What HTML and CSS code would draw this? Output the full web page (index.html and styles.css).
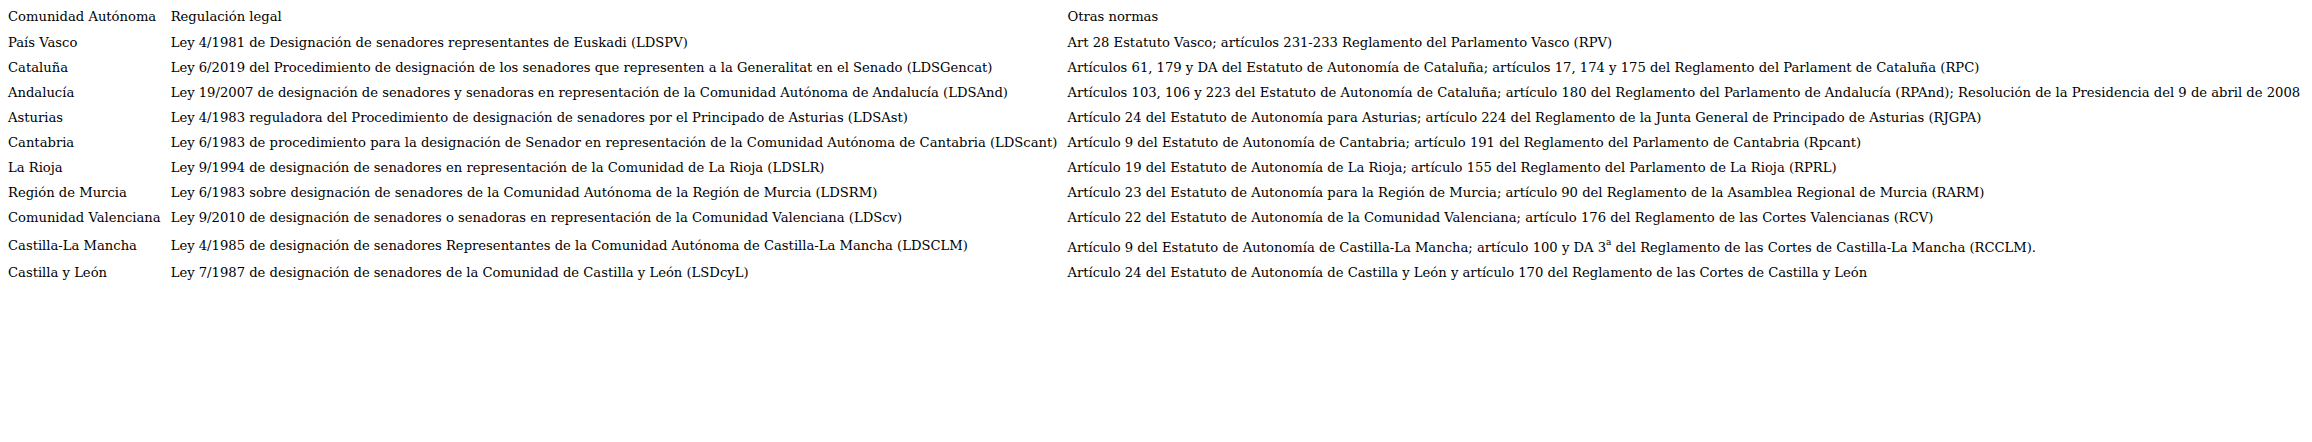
FILE: index.html
```html
<!DOCTYPE html>
<html lang="es">
<head>
<meta charset="utf-8">
<title>Designación de senadores autonómicos</title>
<link rel="stylesheet" href="styles.css">
</head>
<body>
<table class="normas">
  <tr class="head"><td>Comunidad Autónoma</td><td>Regulación legal</td><td>Otras normas</td></tr>
  <tr><td>País Vasco</td><td>Ley 4/1981 de Designación de senadores representantes de Euskadi (LDSPV)</td><td>Art 28 Estatuto Vasco; artículos 231-233 Reglamento del Parlamento Vasco (RPV)</td></tr>
  <tr><td>Cataluña</td><td>Ley 6/2019 del Procedimiento de designación de los senadores que representen a la Generalitat en el Senado (LDSGencat)</td><td>Artículos 61, 179 y DA del Estatuto de Autonomía de Cataluña; artículos 17, 174 y 175 del Reglamento del Parlament de Cataluña (RPC)</td></tr>
  <tr><td>Andalucía</td><td>Ley 19/2007 de designación de senadores y senadoras en representación de la Comunidad Autónoma de Andalucía (LDSAnd)</td><td>Artículos 103, 106 y 223 del Estatuto de Autonomía de Cataluña; artículo 180 del Reglamento del Parlamento de Andalucía (RPAnd); Resolución de la Presidencia del 9 de abril de 2008</td></tr>
  <tr><td>Asturias</td><td>Ley 4/1983 reguladora del Procedimiento de designación de senadores por el Principado de Asturias (LDSAst)</td><td>Artículo 24 del Estatuto de Autonomía para Asturias; artículo 224 del Reglamento de la Junta General de Principado de Asturias (RJGPA)</td></tr>
  <tr><td>Cantabria</td><td>Ley 6/1983 de procedimiento para la designación de Senador en representación de la Comunidad Autónoma de Cantabria (LDScant)</td><td>Artículo 9 del Estatuto de Autonomía de Cantabria; artículo 191 del Reglamento del Parlamento de Cantabria (Rpcant)</td></tr>
  <tr><td>La Rioja</td><td>Ley 9/1994 de designación de senadores en representación de la Comunidad de La Rioja (LDSLR)</td><td>Artículo 19 del Estatuto de Autonomía de La Rioja; artículo 155 del Reglamento del Parlamento de La Rioja (RPRL)</td></tr>
  <tr><td>Región de Murcia</td><td>Ley 6/1983 sobre designación de senadores de la Comunidad Autónoma de la Región de Murcia (LDSRM)</td><td>Artículo 23 del Estatuto de Autonomía para la Región de Murcia; artículo 90 del Reglamento de la Asamblea Regional de Murcia (RARM)</td></tr>
  <tr><td>Comunidad Valenciana</td><td>Ley 9/2010 de designación de senadores o senadoras en representación de la Comunidad Valenciana (LDScv)</td><td>Artículo 22 del Estatuto de Autonomía de la Comunidad Valenciana; artículo 176 del Reglamento de las Cortes Valencianas (RCV)</td></tr>
  <tr><td>Castilla-La Mancha</td><td>Ley 4/1985 de designación de senadores Representantes de la Comunidad Autónoma de Castilla-La Mancha (LDSCLM)</td><td>Artículo 9 del Estatuto de Autonomía de Castilla-La Mancha; artículo 100 y DA 3<sup>a</sup> del Reglamento de las Cortes de Castilla-La Mancha (RCCLM).</td></tr>
  <tr><td>Castilla y León</td><td>Ley 7/1987 de designación de senadores de la Comunidad de Castilla y León (LSDcyL)</td><td>Artículo 24 del Estatuto de Autonomía de Castilla y León y artículo 170 del Reglamento de las Cortes de Castilla y León</td></tr>
</table>
</body>
</html>
```

FILE: styles.css
```css
html, body {
  margin: 0;
  padding: 0;
  background: #ffffff;
}

body {
  font-family: "DejaVu Serif", serif;
  font-size: 13.15px;
  color: #000000;
  overflow: hidden;
}

.normas {
  margin: 3px 0 0 8px;
  border-collapse: collapse;
  border-spacing: 0;
}

.normas td {
  padding: 5px 10px 5px 0;
  white-space: nowrap;
  vertical-align: middle;
  line-height: 15px;
}

.normas .head td {
  padding-top: 6px;
  padding-bottom: 6px;
}

.normas sup {
  font-size: 9px;
  line-height: 15px;
  vertical-align: 7px;
}
```
